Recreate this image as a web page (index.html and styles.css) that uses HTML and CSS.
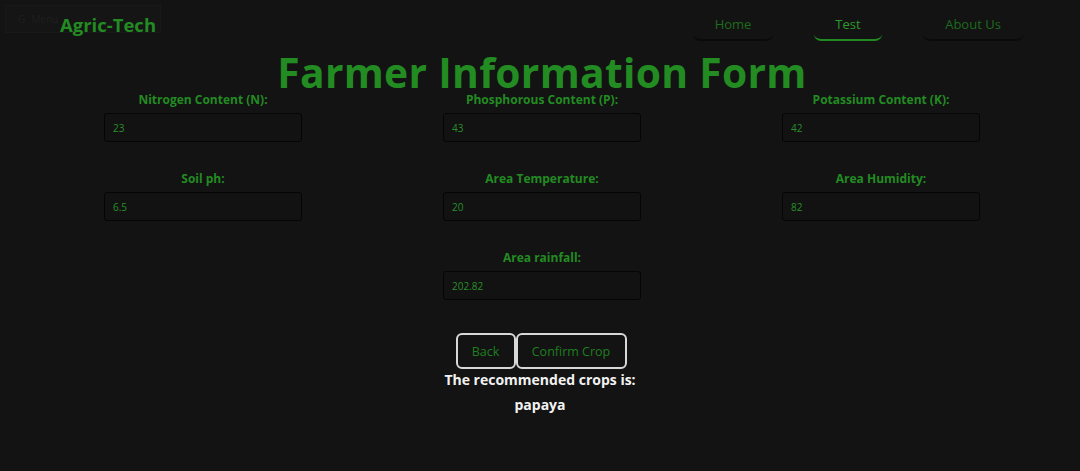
FILE: index.html
```html
<!DOCTYPE html>
<html lang="en">
<head>
<meta charset="utf-8">
<title>Agric-Tech</title>
<link rel="stylesheet" href="styles.css">
</head>
<body>
<div class="ghost"><span>G</span><span>Menu</span></div>
<header class="header">
  <div class="brand">Agric-Tech</div>
  <nav class="nav">
    <a class="nav-item nav-home">Home</a>
    <a class="nav-item nav-test active">Test</a>
    <a class="nav-item nav-about">About Us</a>
  </nav>
</header>
<main class="main">
  <h1 class="title">Farmer Information Form</h1>
  <form class="grid">
    <div class="field"><label>Nitrogen Content (N):</label><input type="text" value="23"></div>
    <div class="field"><label>Phosphorous Content (P):</label><input type="text" value="43"></div>
    <div class="field"><label>Potassium Content (K):</label><input type="text" value="42"></div>
    <div class="field"><label>Soil ph:</label><input type="text" value="6.5"></div>
    <div class="field"><label>Area Temperature:</label><input type="text" value="20"></div>
    <div class="field"><label>Area Humidity:</label><input type="text" value="82"></div>
    <div class="field col2"><label>Area rainfall:</label><input type="text" value="202.82"></div>
  </form>
  <div class="actions">
    <button class="btn btn-back" type="button">Back</button>
    <button class="btn btn-confirm" type="button">Confirm Crop</button>
  </div>
  <p class="result">The recommended crops is:</p>
  <p class="crop">papaya</p>
</main>
</body>
</html>
```

FILE: styles.css
```css
* { box-sizing: border-box; }
html, body { margin: 0; padding: 0; }
body {
  background: #131313;
  font-family: "Open Sans", "Noto Sans", sans-serif;
  color: #228b22;
  width: 1080px;
  height: 471px;
  overflow: hidden;
  position: relative;
}
.ghost {
  position: absolute;
  left: 5px;
  top: 5px;
  width: 156px;
  height: 28px;
  background: #151515;
  border: 1px solid #191919;
  display: flex;
  align-items: center;
  gap: 6px;
  padding-left: 12px;
  font-size: 10px;
  color: #1f1f1f;
}
.header {
  display: flex;
  justify-content: space-between;
  align-items: flex-start;
  height: 48px;
  padding: 0 57px 0 60px;
  position: relative;
}
.brand {
  font-size: 18.5px;
  font-weight: 700;
  color: #228b22;
  margin-top: 12px;
}
.nav {
  display: flex;
  gap: 41px;
  margin-top: 9px;
}
.nav-item {
  display: flex;
  justify-content: center;
  align-items: center;
  height: 32px;
  font-size: 13px;
  color: #1d6b1d;
  border-radius: 0 0 7px 7px;
  border-bottom: 2px solid #0a0a0a;
  padding-bottom: 1px;
}
.nav-home { width: 80px; }
.nav-test { width: 68px; color: #2c9a2c; border-bottom: 2px solid #1f8a1f; }
.nav-about { width: 100px; }
.main {
  display: flex;
  flex-direction: column;
  align-items: center;
}
.title {
  margin: 0 0 0 4px;
  font-size: 40.8px;
  line-height: 48px;
  font-weight: 700;
  color: #228b22;
  letter-spacing: 0.3px;
}
.grid {
  display: grid;
  grid-template-columns: repeat(3, 339px);
  row-gap: 28px;
  margin-left: 4px;
  margin-top: -5px;
}
.field {
  display: flex;
  flex-direction: column;
  align-items: center;
}
.col2 { grid-column: 2; }
.field label {
  font-size: 12px;
  font-weight: 700;
  line-height: 17px;
  color: #228b22;
  margin-bottom: 5px;
}
.field input {
  width: 198px;
  height: 29px;
  background: #121212;
  border: 1px solid #050505;
  border-radius: 3px;
  color: #2a8f2a;
  font-family: "Open Sans", sans-serif;
  font-size: 10px;
  padding: 0 8px;
  outline: none;
}
.actions {
  display: flex;
  margin-top: 33px;
  margin-left: 2px;
}
.btn {
  height: 36px;
  background: transparent;
  border: 2px solid #d8d8d8;
  border-radius: 6px;
  color: #1f7f1f;
  font-family: "Open Sans", sans-serif;
  font-size: 12.5px;
  padding: 0;
}
.btn-back { width: 60px; }
.btn-confirm { width: 111px; }
.result, .crop {
  margin: 0;
  color: #f2f2f2;
  font-weight: 700;
  font-size: 14px;
  line-height: 24px;
}
.result { margin-top: -1px; }
.crop { margin-top: 1px; }
```
